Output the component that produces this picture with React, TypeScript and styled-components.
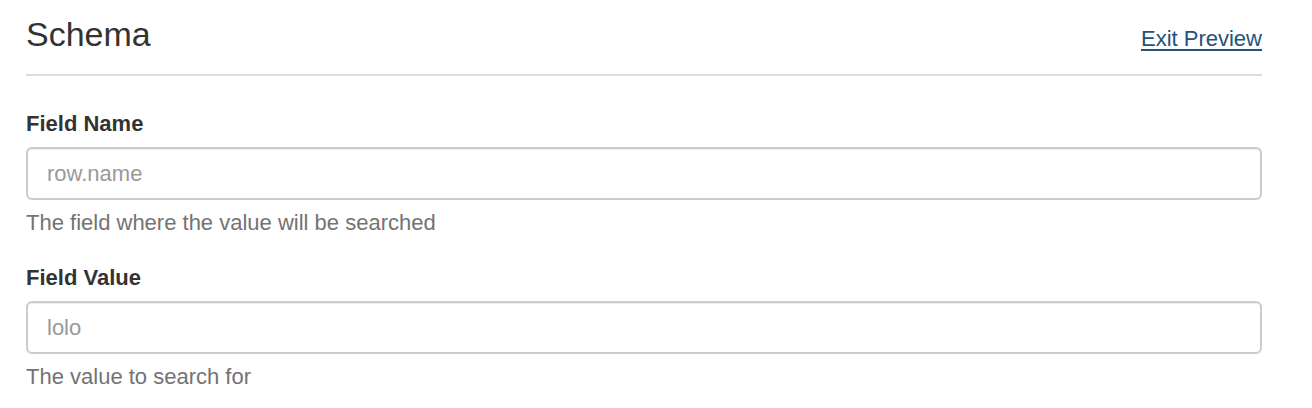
import React from "react";
import styled, { createGlobalStyle } from "styled-components";

const GlobalStyle = createGlobalStyle`
  * { box-sizing: border-box; }
  body {
    margin: 0;
    background: #fff;
    font-family: "Liberation Sans", Arial, sans-serif;
    font-size: 22px;
    line-height: 31px;
    color: #333;
  }
`;

const Page = styled.div`
  padding: 14px 50px 0 26px;
`;

const Header = styled.div`
  display: flex;
  justify-content: space-between;
  align-items: baseline;
  padding-bottom: 20px;
  border-bottom: 2px solid #ddd;
  margin-bottom: 32px;
`;

const Title = styled.h3`
  margin: 0;
  font-size: 34px;
  font-weight: 400;
  line-height: 40px;
  color: #333;
`;

const ExitLink = styled.a`
  font-size: 22px;
  color: #23527c;
  text-decoration: underline;
  text-underline-offset: 3px;
  cursor: pointer;
`;

const FormGroup = styled.div`
  margin-bottom: 24px;
`;

const Label = styled.label`
  display: block;
  font-weight: 700;
  margin-bottom: 8px;
`;

const Input = styled.input`
  display: block;
  width: 100%;
  height: 53px;
  padding: 9px 19px;
  font-family: inherit;
  font-size: 22px;
  color: #555;
  background: #fff;
  border: 2px solid #ccc;
  border-radius: 6px;
  box-shadow: inset 0 1px 1px rgba(0, 0, 0, 0.075);
  outline: none;

  &::placeholder {
    color: #999;
  }
`;

const Help = styled.span`
  display: block;
  margin-top: 7px;
  color: #737373;
`;

export default function App() {
  return (
    <>
      <GlobalStyle />
      <Page>
        <Header>
          <Title>Schema</Title>
          <ExitLink>Exit Preview</ExitLink>
        </Header>
        <FormGroup>
          <Label>Field Name</Label>
          <Input placeholder="row.name" />
          <Help>The field where the value will be searched</Help>
        </FormGroup>
        <FormGroup>
          <Label>Field Value</Label>
          <Input placeholder="lolo" />
          <Help>The value to search for</Help>
        </FormGroup>
      </Page>
    </>
  );
}
